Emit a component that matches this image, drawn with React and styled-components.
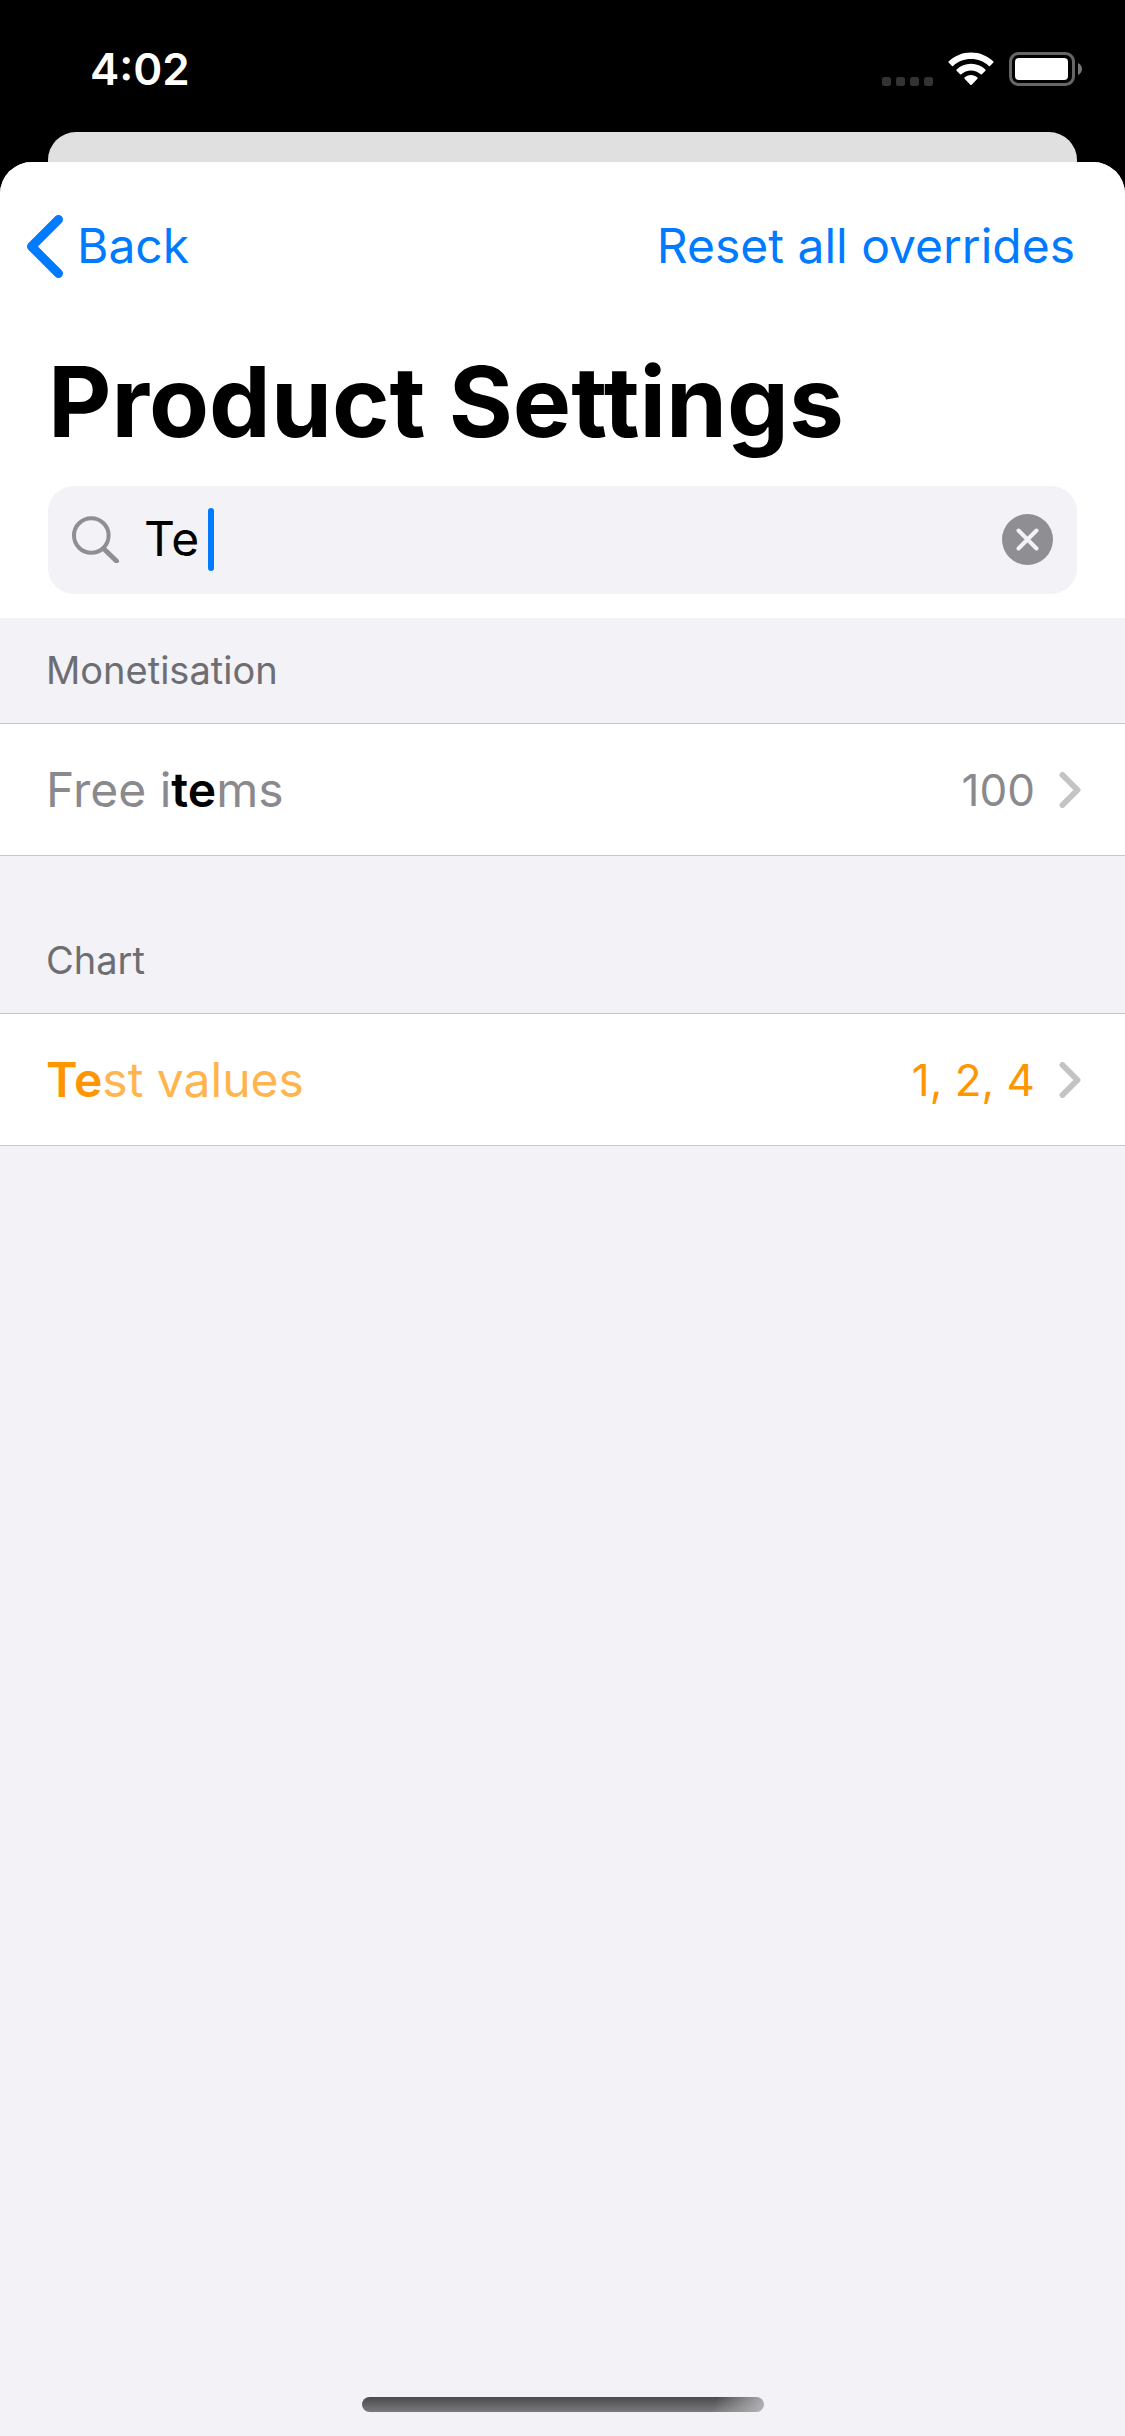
import React, { useState } from "react";
import styled, { createGlobalStyle } from "styled-components";

const color = {
  tint: "#007aff",
  label: "#000000",
  secondary: "#8a8a8e",
  header: "#6d6d72",
  separator: "#c6c6c8",
  chevron: "#c4c4c6",
  group: "#f2f2f7",
  icon: "#8e8e93",
  override: "#ff9500",
  overrideMuted: "#ffb54d",
};

const GlobalStyle = createGlobalStyle`
  *, *::before, *::after { box-sizing: border-box; }
  body {
    margin: 0;
    background: #000;
    font-family: Inter, "Liberation Sans", sans-serif;
  }
  button, input {
    margin: 0;
    padding: 0;
    border: 0;
    background: none;
    font: inherit;
    color: inherit;
    outline: none;
  }
  svg { display: block; flex: none; }
`;

const Screen = styled.div`
  display: flex;
  flex-direction: column;
  min-height: 100vh;
  background: #000;
`;

const StatusBar = styled.header`
  display: flex;
  align-items: center;
  justify-content: space-between;
  height: 132px;
  padding: 6px 42px 0 90px;
  color: #fff;
`;

const Clock = styled.time`
  font-size: 44px;
  font-weight: 600;
  line-height: 54px;
`;

const StatusIcons = styled.div`
  display: flex;
  align-items: flex-end;
  gap: 15px;
`;

const PreviousCard = styled.div`
  height: 30px;
  margin: 0 48px;
  border-radius: 28px 28px 0 0;
  background: #e0e0e0;
`;

const Sheet = styled.main`
  display: flex;
  flex: 1;
  flex-direction: column;
  overflow: hidden;
  border-radius: 32px 32px 0 0;
  background: ${color.group};
`;

const SheetHeader = styled.div`
  padding-bottom: 24px;
  background: #fff;
`;

const NavBar = styled.nav`
  display: flex;
  align-items: center;
  justify-content: space-between;
  height: 168px;
  padding: 0 50px 0 27px;
`;

const NavButton = styled.button`
  display: flex;
  align-items: center;
  gap: 14px;
  color: ${color.tint};
  font-size: 48px;
  line-height: 60px;
  cursor: pointer;
`;

const Title = styled.h1`
  margin: 0;
  padding: 12px 48px 24px;
  font-size: 98px;
  font-weight: 700;
  line-height: 120px;
`;

const SearchField = styled.form`
  display: flex;
  align-items: center;
  height: 108px;
  margin: 0 48px;
  padding: 0 24px 2px;
  border-radius: 26px;
  background: ${color.group};
`;

const SearchLabel = styled.label`
  display: flex;
  flex: 1;
  align-items: center;
  gap: 24px;
`;

const SearchInput = styled.input`
  field-sizing: content;
  color: ${color.label};
  font-size: 48px;
  line-height: 60px;
  caret-color: transparent;
`;

const Typing = styled.span`
  display: flex;
  align-items: center;
  gap: 9px;
`;

const Caret = styled.span`
  width: 6px;
  height: 63px;
  border-radius: 3px;
  background: ${color.tint};
`;

const ClearButton = styled.button`
  cursor: pointer;
`;

const SectionTitle = styled.h2`
  display: flex;
  align-items: flex-end;
  height: ${(p) => (p.$first ? 105 : 157)}px;
  margin: 0;
  padding: 0 46px 30px;
  color: ${color.header};
  font-size: 38px;
  font-weight: 400;
  line-height: 46px;
`;

const Row = styled.button`
  display: flex;
  align-items: center;
  gap: 24px;
  width: 100%;
  height: 133px;
  padding: 0 44px 0 46px;
  border: solid ${color.separator};
  border-width: 1px 0;
  background: #fff;
  text-align: left;
  cursor: pointer;
`;

const RowLabel = styled.span`
  flex: 1;
  color: ${(p) => (p.$overridden ? color.overrideMuted : color.secondary)};
  font-size: 48px;
  line-height: 60px;
`;

const Match = styled.mark`
  background: none;
  color: ${(p) => (p.$overridden ? color.override : color.label)};
  font-weight: 600;
`;

const RowValue = styled.span`
  color: ${(p) => (p.$overridden ? color.override : color.secondary)};
  font-size: 44px;
  line-height: 54px;
`;

const HomeIndicator = styled.div`
  width: 402px;
  height: 15px;
  margin: auto auto 24px;
  border-radius: 8px;
  background:
    linear-gradient(110deg, rgba(180, 180, 184, 0) 87%, #b4b4b8 100%),
    linear-gradient(#4a4a4b, #7a7a7b);
`;

const CellularDots = () => (
  <svg width="51" height="9" viewBox="0 0 51 9" fill="#333" aria-hidden="true">
    {[0, 14, 28, 42].map((x) => (
      <rect key={x} x={x} width="9" height="9" rx="2.5" />
    ))}
  </svg>
);

const Wifi = () => (
  <svg width="46" height="34" viewBox="0 0 46 34" fill="#fff" aria-hidden="true">
    <path d="M23 0.5C31.700 0.500 39.600 3.900 45.400 9.400Q46 10 45.400 10.600L42 14Q41.400 14.500 40.800 14C36.200 9.700 29.900 7.100 23 7.100S9.800 9.700 5.200 14Q4.600 14.500 4 14L0.600 10.600Q0 10 0.600 9.400C6.400 3.900 14.300 0.500 23 0.500Z" />
    <path d="M23 11.800C28.600 11.800 33.600 14 37.400 17.500Q38 18.100 37.400 18.700L33.900 22.200Q33.300 22.700 32.700 22.200C30.100 19.900 26.700 18.500 23 18.500S15.900 19.900 13.300 22.200Q12.700 22.700 12.100 22.200L8.600 18.700Q8 18.100 8.600 17.500C12.400 14 17.400 11.800 23 11.800Z" />
    <path d="M23 23C25.500 23 27.700 24 29.400 25.500Q30 26.100 29.400 26.700L23.700 32.700Q23 33.400 22.300 32.700L16.600 26.700Q16 26.100 16.600 25.500C18.300 24 20.500 23 23 23Z" />
  </svg>
);

const Battery = () => (
  <svg width="74" height="34" viewBox="0 0 74 34" aria-hidden="true">
    <rect x="1.500" y="1.500" width="63" height="31" rx="8" fill="none" stroke="#666" strokeWidth="3" />
    <rect x="6" y="6" width="53" height="22" rx="4" fill="#fff" />
    <path d="M69 11C71.500 12 73 14.500 73 17S71.500 22 69 23Z" fill="#777" />
  </svg>
);

const BackChevron = () => (
  <svg width="36" height="63" viewBox="0 0 36 63" fill="none" stroke="currentColor" strokeWidth="9" strokeLinecap="round" strokeLinejoin="round" aria-hidden="true">
    <path d="M31.500 4.500L4.500 31.500L31.500 58.500" />
  </svg>
);

const RowChevron = () => (
  <svg width="22" height="36" viewBox="0 0 22 36" fill="none" stroke={color.chevron} strokeWidth="6" strokeLinecap="round" strokeLinejoin="round" aria-hidden="true">
    <path d="M3.500 3L18.500 18L3.500 33" />
  </svg>
);

const SearchIcon = () => (
  <svg width="48" height="48" viewBox="0 0 48 48" fill="none" stroke={color.icon} strokeLinecap="round" aria-hidden="true">
    <circle cx="19.300" cy="20.500" r="17.300" strokeWidth="4" />
    <path d="M32 34L44.500 46" strokeWidth="5" />
  </svg>
);

const ClearIcon = () => (
  <svg width="51" height="51" viewBox="0 0 51 51" aria-hidden="true">
    <circle cx="25.500" cy="25.500" r="25.500" fill={color.icon} />
    <path d="M16.500 16.500L34.500 34.500M34.500 16.500L16.500 34.500" stroke={color.group} strokeWidth="4" strokeLinecap="round" />
  </svg>
);

const sections = [
  {
    title: "Monetisation",
    rows: [{ before: "Free i", match: "te", after: "ms", value: "100", overridden: false }],
  },
  {
    title: "Chart",
    rows: [{ before: "", match: "Te", after: "st values", value: "1, 2, 4", overridden: true }],
  },
];

export default function App() {
  const [query, setQuery] = useState("Te");

  return (
    <Screen>
      <GlobalStyle />
      <StatusBar>
        <Clock>4:02</Clock>
        <StatusIcons>
          <CellularDots />
          <Wifi />
          <Battery />
        </StatusIcons>
      </StatusBar>
      <PreviousCard />
      <Sheet>
        <SheetHeader>
          <NavBar>
            <NavButton type="button">
              <BackChevron />
              Back
            </NavButton>
            <NavButton type="button">Reset all overrides</NavButton>
          </NavBar>
          <Title>Product Settings</Title>
          <SearchField role="search" onSubmit={(e) => e.preventDefault()}>
            <SearchLabel>
              <SearchIcon />
              <Typing>
                <SearchInput
                  type="text"
                  aria-label="Search settings"
                  value={query}
                  onChange={(e) => setQuery(e.target.value)}
                />
                <Caret />
              </Typing>
            </SearchLabel>
            <ClearButton type="button" aria-label="Clear text" onClick={() => setQuery("")}>
              <ClearIcon />
            </ClearButton>
          </SearchField>
        </SheetHeader>
        {sections.map((section, i) => (
          <section key={section.title}>
            <SectionTitle $first={i === 0}>{section.title}</SectionTitle>
            {section.rows.map((row) => (
              <Row type="button" key={row.value}>
                <RowLabel $overridden={row.overridden}>
                  {row.before}
                  <Match $overridden={row.overridden}>{row.match}</Match>
                  {row.after}
                </RowLabel>
                <RowValue $overridden={row.overridden}>{row.value}</RowValue>
                <RowChevron />
              </Row>
            ))}
          </section>
        ))}
        <HomeIndicator />
      </Sheet>
    </Screen>
  );
}
